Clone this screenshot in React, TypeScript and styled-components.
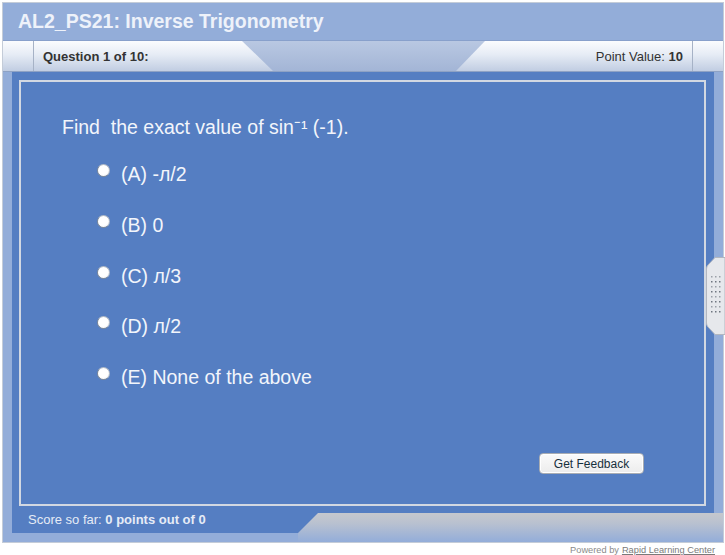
import React from 'react';
import styled, { createGlobalStyle } from 'styled-components';

const GlobalStyle = createGlobalStyle`
  html, body {
    margin: 0;
    padding: 0;
    background: #ffffff;
  }
  body {
    font-family: "Liberation Sans", Arial, sans-serif;
  }
`;

const Page = styled.div`
  position: relative;
  width: 725px;
  height: 555px;
  overflow: hidden;
`;

const Frame = styled.div`
  margin: 2px 0 0 2px;
  width: 720px;
  border: 1px solid #c4ccd8;
  background: #93add9;
  display: flex;
  flex-direction: column;
`;

const TitleBar = styled.div`
  height: 37px;
  display: flex;
  align-items: center;
  padding-left: 15px;
  font-size: 19.5px;
  font-weight: bold;
  color: #eef2fa;
  padding-bottom: 1px;
  box-sizing: border-box;
`;

const TabBar = styled.div`
  height: 32px;
  box-sizing: border-box;
  border-top: 1px solid #88a0cb;
  border-bottom: 1px solid #8ea2c4;
  display: flex;
  background: linear-gradient(#b9c8e2, #a3b5d6);
  font-size: 13px;
  color: #333;
`;

const tabFill = 'linear-gradient(#fbfcfe 0%, #e6ecf5 45%, #c1cde2 100%)';

const Stub = styled.div<{ side: 'left' | 'right' }>`
  width: 30px;
  background: ${tabFill};
  ${({ side }) => (side === 'left' ? 'border-right' : 'border-left')}: 1px solid #a6b2c6;
`;

const Tab = styled.div<{ side: 'left' | 'right' }>`
  width: ${({ side }) => (side === 'left' ? 239 : 236)}px;
  background: ${tabFill};
  display: flex;
  align-items: center;
  justify-content: ${({ side }) => (side === 'left' ? 'flex-start' : 'flex-end')};
  padding: ${({ side }) => (side === 'left' ? '0 0 0 9px' : '0 9px 0 0')};
  box-sizing: border-box;
  clip-path: ${({ side }) =>
    side === 'left'
      ? 'polygon(0 0, 208px 0, 100% 100%, 0 100%)'
      : 'polygon(29px 0, 100% 0, 100% 100%, 0 100%)'};
`;

const Spacer = styled.div`
  flex: 1;
`;

const Panel = styled.div`
  margin: 0 9px;
  padding: 8px 8px 7px 7px;
  background: #557ec2;
`;

const InnerFrame = styled.div`
  height: 426px;
  box-sizing: border-box;
  border: 2px solid #d2d8e2;
  display: flex;
  flex-direction: column;
  color: #f2f5fb;
`;

const Question = styled.div`
  padding: 34px 0 0 41px;
  font-size: 19.5px;
  line-height: 22px;
  white-space: pre;
`;

const Options = styled.div`
  margin-top: 25px;
  padding-left: 76px;
  display: flex;
  flex-direction: column;
  gap: 28.75px;
`;

const Option = styled.label`
  display: flex;
  align-items: flex-start;
  gap: 11px;
  font-size: 19.5px;
  line-height: 22px;
`;

const Radio = styled.span`
  width: 13px;
  height: 13px;
  margin-top: 1px;
  border-radius: 50%;
  box-sizing: border-box;
  background: radial-gradient(circle at 45% 40%, #ffffff 55%, #e4e4e4 100%);
  border: 1px solid #7f8a99;
  border-top-color: #b4bcc8;
  border-right-color: #b4bcc8;
`;

const ButtonRow = styled.div`
  margin-top: auto;
  padding: 0 60px 30px 0;
  display: flex;
  justify-content: flex-end;
`;

const FeedbackButton = styled.button`
  width: 105px;
  height: 21px;
  padding: 0;
  border: 1px solid #a9adb3;
  border-radius: 4px;
  background: linear-gradient(#fbfbfb, #ececec);
  box-shadow: inset 0 0 0 1px #ffffff;
  font-family: "Liberation Sans", Arial, sans-serif;
  font-size: 12px;
  color: #17303c;
`;

const FooterRow = styled.div`
  height: 29px;
  display: flex;
`;

const ScoreBox = styled.div`
  flex: 1;
  height: 20px;
  box-sizing: border-box;
  margin: 0 -30px 0 9px;
  padding: 0 0 6px 16px;
  background: #557ec2;
  display: flex;
  align-items: center;
  font-size: 13px;
  line-height: 14px;
  color: #e6ecf6;
`;

const Trapezoid = styled.div`
  flex: 0 0 425px;
  height: 29px;
  background: linear-gradient(#c6c8cd 0%, #b9c1d0 35%, #93add9 100%);
  clip-path: polygon(20px 0, 100% 0, 100% 100%, 0 100%, 0 20px);
`;

const Powered = styled.div`
  text-align: right;
  padding: 2px 10px 0 0;
  font-size: 9.25px;
  color: #8a8a8a;
`;

const PoweredLink = styled.span`
  color: #7a7a7a;
  text-decoration: underline;
  margin-left: 3px;
`;

const Handle = styled.svg`
  position: absolute;
  left: 706px;
  top: 257px;
`;

const dotRows = [0, 1, 2, 3, 4, 5, 6, 7];
const dotCols = [5, 9, 13];

const options = ['(A) -л/2', '(B) 0', '(C) л/3', '(D) л/2', '(E) None of the above'];

export default function App() {
  return (
    <Page>
      <GlobalStyle />
      <Frame>
        <TitleBar>AL2_PS21: Inverse Trigonometry</TitleBar>
        <TabBar>
          <Stub side="left" />
          <Tab side="left">
            <b>Question 1 of 10:</b>
          </Tab>
          <Spacer />
          <Tab side="right">
            Point Value:&nbsp;<b>10</b>
          </Tab>
          <Stub side="right" />
        </TabBar>
        <Panel>
          <InnerFrame>
            <Question>Find  the exact value of sin⁻¹ (-1).</Question>
            <Options>
              {options.map((o) => (
                <Option key={o}>
                  <Radio />
                  {o}
                </Option>
              ))}
            </Options>
            <ButtonRow>
              <FeedbackButton>Get Feedback</FeedbackButton>
            </ButtonRow>
          </InnerFrame>
        </Panel>
        <FooterRow>
          <ScoreBox>
            Score so far:&nbsp;<b>0 points out of 0</b>
          </ScoreBox>
          <Trapezoid />
        </FooterRow>
      </Frame>
      <Powered>
        Powered by<PoweredLink>Rapid Learning Center</PoweredLink>
      </Powered>
      <Handle width="19" height="78" viewBox="0 0 19 78">
        <path d="M9,0.5 H19 V77.5 H9 L2,70 Q0.5,68.5 0.5,66 V12 Q0.5,9.5 2,8 Z" fill="#e6e8ec" stroke="#b2b7c0" />
        {dotRows.map((r) =>
          dotCols.map((c) => (
            <rect key={`${r}-${c}`} x={c} y={19 + r * 5} width="1.5" height="1.5" fill={r % 2 ? '#6f7680' : '#9aa0a8'} />
          ))
        )}
      </Handle>
    </Page>
  );
}
